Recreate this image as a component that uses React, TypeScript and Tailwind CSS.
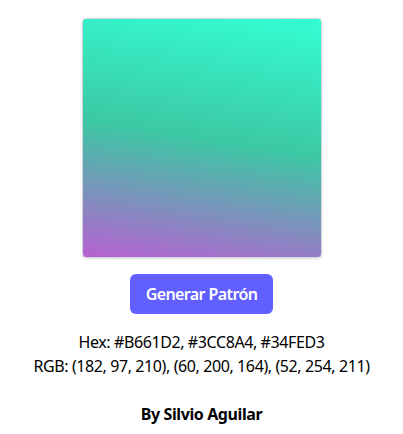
export default function App() {
  const hex = ['#B661D2', '#3CC8A4', '#34FED3'];
  const rgb = ['(182, 97, 210)', '(60, 200, 164)', '(52, 254, 211)'];

  return (
    <div className="min-h-screen bg-white font-['Noto_Sans',sans-serif] tracking-[-0.4px] text-black">
      <div className="flex flex-col items-center pt-[18px]">
        {/* pattern preview */}
        <div className="h-60 w-60 rounded border border-gray-300 bg-[linear-gradient(9deg,#B661D2,#3CC8A4,#34FED3)] shadow-sm" />

        <button className="mt-4 rounded-md bg-indigo-500 px-4 py-2 text-base font-semibold tracking-[-0.6px] text-white">
          Generar Patrón
        </button>

        <div className="mt-4 text-center text-base leading-6">
          <p>Hex: {hex.join(', ')}</p>
          <p>RGB: {rgb.join(', ')}</p>
        </div>

        <p className="mt-6 text-base font-bold">By Silvio Aguilar</p>
      </div>
    </div>
  );
}
